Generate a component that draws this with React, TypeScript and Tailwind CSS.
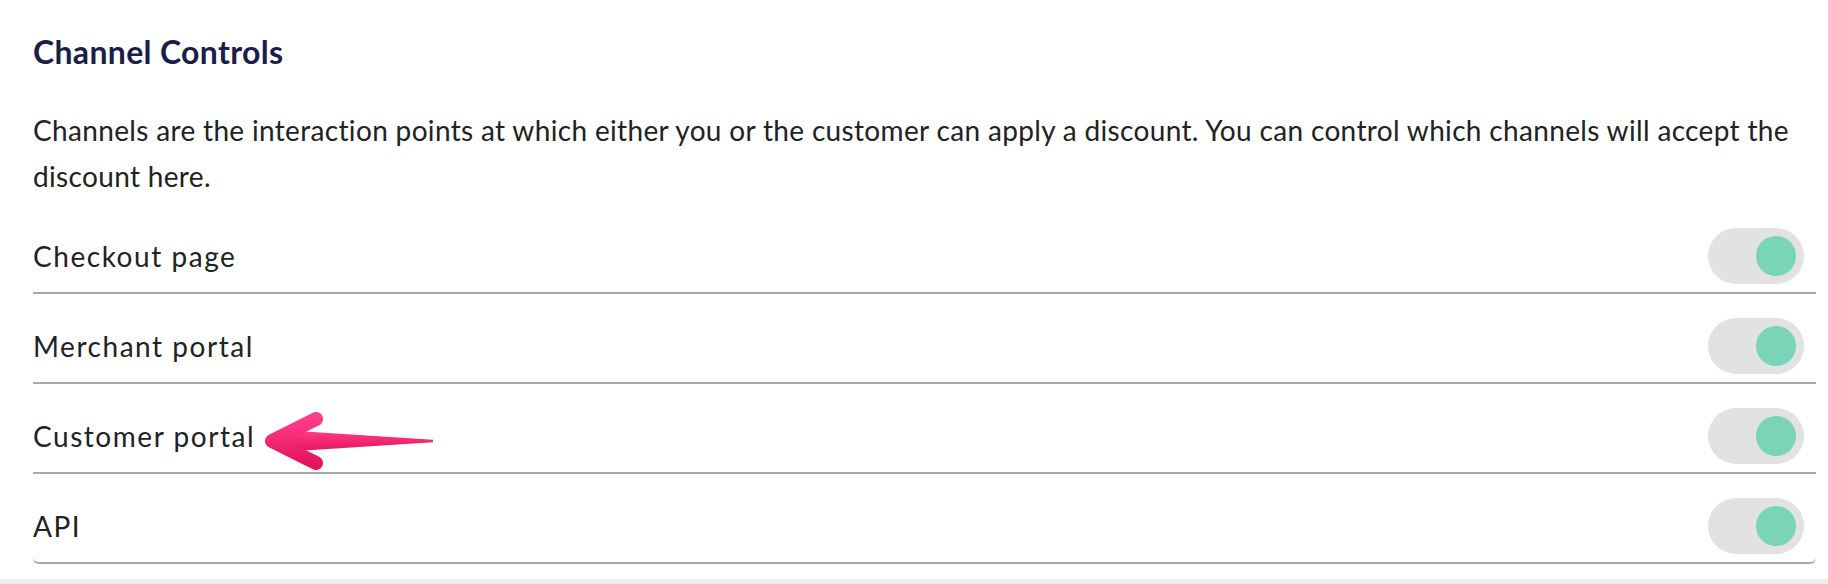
import { useState } from 'react';

const channels = ['Checkout page', 'Merchant portal', 'Customer portal', 'API'];

function Toggle({ on, onChange }: { on: boolean; onChange: () => void }) {
  return (
    <button
      onClick={onChange}
      className={`flex h-[56px] w-[96px] shrink-0 items-center rounded-full bg-[#e2e2e2] px-[8px] ${on ? 'justify-end' : 'justify-start'}`}
    >
      <span className={`h-[40px] w-[40px] rounded-full ${on ? 'bg-[#79d4b8]' : 'bg-white'}`} />
    </button>
  );
}

function Arrow() {
  return (
    <svg
      width="180"
      height="64"
      viewBox="0 0 180 64"
      className="pointer-events-none absolute left-[228px] top-[-24px]"
    >
      <defs>
        <linearGradient id="pink" x1="0" y1="0" x2="0" y2="1">
          <stop offset="0" stopColor="#ff3d8a" />
          <stop offset="1" stopColor="#e5135b" />
        </linearGradient>
      </defs>
      <path d="M20 18 L172 27.8 L172 30.2 L20 40 Z" fill="url(#pink)" />
      <path
        d="M55 7 L11 29 L55 51"
        fill="none"
        stroke="url(#pink)"
        strokeWidth="14"
        strokeLinecap="round"
        strokeLinejoin="round"
      />
    </svg>
  );
}

export default function App() {
  const [state, setState] = useState<Record<string, boolean>>({
    'Checkout page': true,
    'Merchant portal': true,
    'Customer portal': true,
    API: true,
  });

  return (
    <div className="flex h-[584px] flex-col bg-white font-['Lato','Noto_Sans',sans-serif] text-[#222222]">
      <div className="pb-[15px] pl-[33px] pr-[12px] pt-[32px]">
        <h2 className="text-[32px] font-bold leading-[40px] tracking-[0.01em] text-[#1b1d4a]">Channel Controls</h2>

        <p className="mt-[35px] text-[28px] leading-[46px] tracking-[0.012em]">
          Channels are the interaction points at which either you or the customer can apply a discount. You can
          control which channels will accept the discount here.
        </p>

        <div className="mt-[5px]">
          {channels.map((name, i) => (
            <div
              key={name}
              className={`relative flex h-[90px] items-center justify-between border-b-2 border-[#a8a8a8] pr-[12px] pt-[16px] ${i === channels.length - 1 ? 'rounded-b-[6px]' : ''}`}
            >
              <span className="text-[28px] tracking-[0.055em]">{name}</span>
              {name === 'Customer portal' && (
                <div className="absolute left-0 top-1/2 mt-[8px]">
                  <Arrow />
                </div>
              )}
              <Toggle on={state[name]} onChange={() => setState({ ...state, [name]: !state[name] })} />
            </div>
          ))}
        </div>
      </div>
      <div className="flex-1 bg-[#efefef]" />
    </div>
  );
}
